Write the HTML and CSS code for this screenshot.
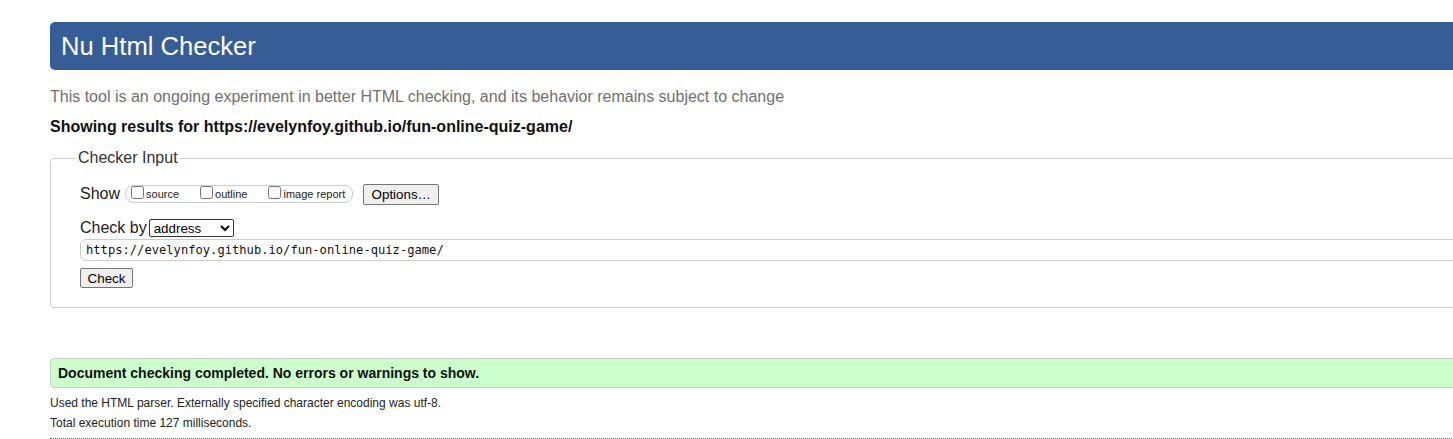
FILE: index.html
```html
<!DOCTYPE html>
<html lang="en">
<head>
<meta charset="utf-8">
<title>Nu Html Checker</title>
<link rel="stylesheet" href="styles.css">
</head>
<body>
<div class="page">
  <h1 class="title">Nu Html Checker</h1>
  <p class="intro">This tool is an ongoing experiment in better HTML checking, and its behavior remains subject to change</p>
  <p class="showing">Showing results for https://evelynfoy.github.io/fun-online-quiz-game/</p>
  <fieldset class="checker">
    <legend class="legend">Checker Input</legend>
    <div class="row show-row">
      <span class="row-label">Show</span>
      <span class="opts">
        <label class="opt"><input type="checkbox" class="cb">source</label>
        <label class="opt"><input type="checkbox" class="cb">outline</label>
        <label class="opt"><input type="checkbox" class="cb">image report</label>
      </span>
      <button class="btn options-btn" type="button">Options…</button>
    </div>
    <div class="row by-row">
      <span class="row-label">Check by</span>
      <select class="sel"><option>address</option></select>
    </div>
    <div class="url">https://evelynfoy.github.io/fun-online-quiz-game/</div>
    <div class="row">
      <button class="btn check-btn" type="button">Check</button>
    </div>
  </fieldset>
  <p class="success">Document checking completed. No errors or warnings to show.</p>
  <p class="meta meta-first">Used the HTML parser. Externally specified character encoding was utf-8.</p>
  <p class="meta">Total execution time 127 milliseconds.</p>
  <div class="dots"></div>
</div>
</body>
</html>
```

FILE: styles.css
```css
html, body {
  margin: 0;
  padding: 0;
  overflow: hidden;
  background: #fff;
}
body {
  font-family: "Liberation Sans", Arial, sans-serif;
  color: #111;
}
.page {
  width: 1500px;
  padding: 22px 0 0 50px;
}
.title {
  margin: 0;
  height: 48px;
  line-height: 48px;
  padding-left: 11px;
  background: #365d95;
  color: #fff;
  font-size: 25.6px;
  font-weight: normal;
  border-radius: 5px 0 0 5px;
}
.intro {
  margin: 18px 0 0;
  font-size: 16px;
  line-height: 18px;
  color: #707070;
}
.showing {
  margin: 12px 0 0;
  font-size: 16px;
  line-height: 18px;
  font-weight: bold;
  color: #111;
}
.checker {
  margin: 13px 0 0;
  padding: 4px 0 19px 29px;
  border: 1px solid #ccc;
  border-radius: 4px;
  min-width: 0;
}
.legend {
  padding: 0 2px;
  margin-left: -4px;
  font-size: 16px;
  line-height: 18px;
  color: #333;
}
.row {
  display: flex;
  align-items: center;
}
.show-row {
  margin-top: 12px;
  height: 22px;
}
.row-label {
  font-size: 16px;
  color: #222;
}
.opts {
  display: inline-flex;
  align-items: center;
  margin-left: 5px;
  height: 16px;
  padding: 0 7px 0 5px;
  border: 1px solid #ccc;
  border-radius: 8px;
  gap: 21px;
}
.opt {
  display: inline-flex;
  align-items: center;
  font-size: 11px;
  line-height: 13px;
  color: #222;
}
.opt-text {
  display: inline-block;
}
.cb {
  margin: -3px 2px 0 0;
  width: 13px;
  height: 13px;
}
.btn {
  font-family: "Liberation Sans", Arial, sans-serif;
  font-size: 13.33px;
  color: #000;
  background: #efefef;
  border: 1px solid #767676;
  border-radius: 2px;
  padding: 0 7px;
  height: 21px;
}
.options-btn {
  margin-left: 10px;
  width: 76px;
}
.by-row {
  margin-top: 13px;
  height: 19px;
}
.sel {
  margin-left: 2px;
  width: 85px;
  height: 18px;
  font-family: "Liberation Sans", Arial, sans-serif;
  font-size: 13.33px;
  border: 1px solid #333;
  border-radius: 2px;
  background: #fff;
  padding: 0;
}
.url {
  margin-top: 2px;
  height: 20px;
  line-height: 20px;
  padding-left: 5px;
  border: 1px solid #ccc;
  border-radius: 6px 0 0 6px;
  font-family: "DejaVu Sans Mono", "Liberation Mono", monospace;
  font-size: 12.14px;
  color: #111;
}
.check-btn {
  margin-top: 7px;
  width: 53px;
  height: 20px;
  padding: 0;
}
.success {
  margin: 50px 0 0;
  height: 28px;
  line-height: 28px;
  padding-left: 7px;
  background: #ccffcc;
  border: 1px solid #ccc;
  border-radius: 4px 0 0 4px;
  font-size: 14px;
  font-weight: bold;
  color: #111;
}
.meta {
  margin: 0;
  font-size: 12px;
  line-height: 20px;
  color: #222;
}
.meta-first {
  margin-top: 5px;
}
.dots {
  margin-top: 5px;
  border-top: 1px dotted #666;
}
```
